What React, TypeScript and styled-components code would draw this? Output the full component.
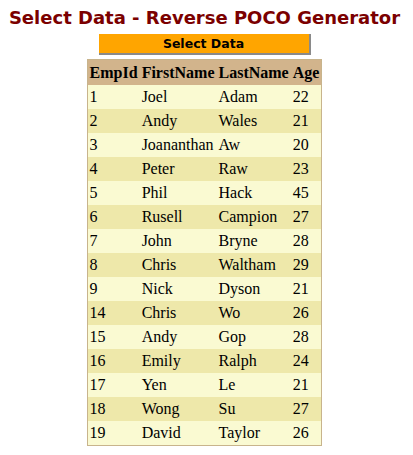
import React from "react";
import styled, { createGlobalStyle } from "styled-components";

const Global = createGlobalStyle`
  html, body { margin: 0; padding: 0; background: #ffffff; }
  body { font-family: "Liberation Serif", "Times New Roman", serif; }
`;

const Page = styled.div`
  display: flex;
  flex-direction: column;
  align-items: center;
  padding: 5px 4px 0 0;
`;

const Title = styled.h1`
  margin: 0;
  font-family: "DejaVu Sans", Verdana, sans-serif;
  font-weight: bold;
  font-size: 18px;
  line-height: 25px;
  color: #7b0000;
  white-space: nowrap;
`;

const Button = styled.button`
  margin-top: 4px;
  width: 212px;
  height: 21px;
  padding: 0;
  background: #ffa500;
  border: none;
  border-right: 2px solid #8a8a8a;
  border-bottom: 2px solid #8a8a8a;
  font-family: "DejaVu Sans", Verdana, sans-serif;
  font-weight: bold;
  font-size: 12.5px;
  color: #000;
`;

const Table = styled.table`
  margin-top: 4px;
  border-collapse: collapse;
  border: 1px solid #c8b48c;
  font-size: 16px;
`;

const HeadCell = styled.th`
  background: #d2b48c;
  text-align: left;
  font-weight: bold;
  padding: 2px 2px;
  height: 21px;
  white-space: nowrap;
`;

const Row = styled.tr<{ $alt: boolean }>`
  background: ${(p) => (p.$alt ? "#eee8aa" : "#fafad2")};
`;

const Cell = styled.td`
  padding: 1px 2px;
  height: 22px;
  white-space: nowrap;
`;

const rows: [number, string, string, number][] = [
  [1, "Joel", "Adam", 22],
  [2, "Andy", "Wales", 21],
  [3, "Joananthan", "Aw", 20],
  [4, "Peter", "Raw", 23],
  [5, "Phil", "Hack", 45],
  [6, "Rusell", "Campion", 27],
  [7, "John", "Bryne", 28],
  [8, "Chris", "Waltham", 29],
  [9, "Nick", "Dyson", 21],
  [14, "Chris", "Wo", 26],
  [15, "Andy", "Gop", 28],
  [16, "Emily", "Ralph", 24],
  [17, "Yen", "Le", 21],
  [18, "Wong", "Su", 27],
  [19, "David", "Taylor", 26],
];

export default function App() {
  return (
    <Page>
      <Global />
      <Title>Select Data - Reverse POCO Generator</Title>
      <Button>Select Data</Button>
      <Table>
        <thead>
          <tr>
            <HeadCell>EmpId</HeadCell>
            <HeadCell>FirstName</HeadCell>
            <HeadCell>LastName</HeadCell>
            <HeadCell>Age</HeadCell>
          </tr>
        </thead>
        <tbody>
          {rows.map((r, i) => (
            <Row key={r[0]} $alt={i % 2 === 1}>
              <Cell>{r[0]}</Cell>
              <Cell>{r[1]}</Cell>
              <Cell>{r[2]}</Cell>
              <Cell>{r[3]}</Cell>
            </Row>
          ))}
        </tbody>
      </Table>
    </Page>
  );
}
